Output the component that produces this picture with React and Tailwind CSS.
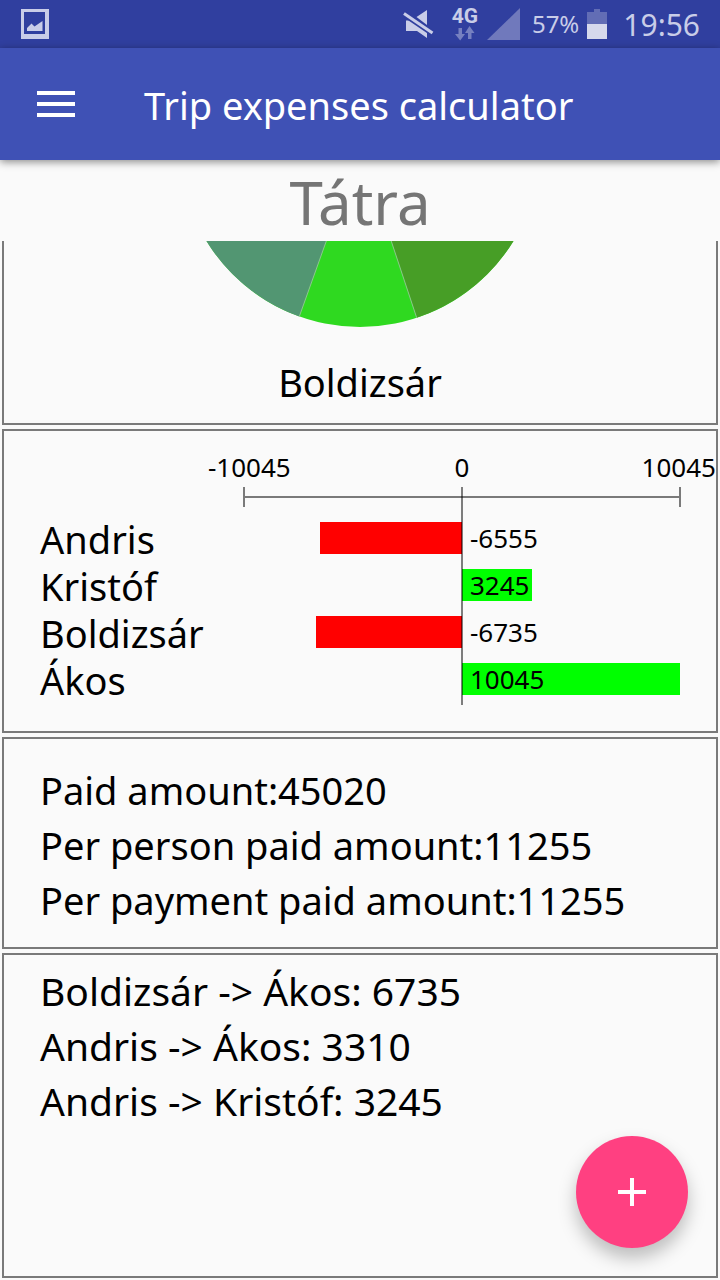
import React from "react";

const LIMIT = 10045;

const balances = [
  { name: "Andris", value: -6555 },
  { name: "Kristóf", value: 3245 },
  { name: "Boldizsár", value: -6735 },
  { name: "Ákos", value: 10045 },
];

const totals = [
  "Paid amount:45020",
  "Per person paid amount:11255",
  "Per payment paid amount:11255",
];

const transfers = [
  "Boldizsár -> Ákos: 6735",
  "Andris -> Ákos: 3310",
  "Andris -> Kristóf: 3245",
];

function StatusBar() {
  return (
    <div className="flex h-12 items-center bg-[#303f9f] pl-5 pr-5 text-[#c9cde8]">
      <svg className="h-8 w-8" viewBox="0 0 32 32" aria-hidden="true">
        <path fill="currentColor" fillRule="evenodd" d="M1 1H29V31H1ZM4 4V26H25V4Z" />
        <path fill="currentColor" d="M7 20L11.5 15.500L14.500 18.500L22.500 13V23H7Z" />
      </svg>
      <div className="ml-auto flex items-center">
        <svg className="h-8 w-8" viewBox="0 0 32 32" aria-hidden="true">
          <path fill="currentColor" d="M13.500 9L24 2V17ZM3 12.500H9L24 22.500V30L14 23H3Z" />
          <path stroke="#303f9f" strokeWidth="6" d="M0 5L30 25.500" />
          <path stroke="currentColor" strokeWidth="3" d="M1 5.500L29.500 25" />
        </svg>
        <div className="ml-4 flex w-7 flex-col items-center">
          <span className="font-[Roboto] text-[21px] font-bold leading-5">4G</span>
          <svg className="h-4 w-5" viewBox="0 0 20 16" aria-hidden="true">
            <path fill="#7680c0" d="M3.500 2H7V8H10L5.200 14.500L0 8H3.500ZM13 13V7H10L14.500 0L19.500 7H16.500V13Z" />
          </svg>
        </div>
        <svg className="ml-2 h-8 w-[33px]" viewBox="0 0 33 32" aria-hidden="true">
          <path fill="#7079bc" d="M33 0V32H0Z" />
        </svg>
        <span className="ml-3 text-2xl">57%</span>
        <svg className="ml-2 h-[30px] w-5" viewBox="0 0 20 30" aria-hidden="true">
          <path fill="#626db5" d="M7 0H13V3H20V15H0V3H7Z" />
          <path fill="#d6d9ec" d="M0 15H20V30H0Z" />
        </svg>
        <span className="ml-4 pt-[2px] text-[30px] leading-10">19:56</span>
      </div>
    </div>
  );
}

function AppBar() {
  return (
    <header className="relative z-10 flex h-28 items-center bg-[#3f51b5] pl-8 text-white shadow-[0_2px_8px_rgba(0,0,0,0.45)]">
      <button type="button" aria-label="Open menu" className="flex h-12 w-12 items-center justify-center">
        <svg className="h-[26px] w-[38px]" viewBox="0 0 38 26" aria-hidden="true">
          <path fill="currentColor" d="M0 0H38V4H0ZM0 11H38V15H0ZM0 22H38V26H0Z" />
        </svg>
      </button>
      <h1 className="ml-16 pt-[2px] text-[38px] leading-[55px]">Trip expenses calculator</h1>
    </header>
  );
}

function PieCard() {
  return (
    <section className="flex flex-col items-center border-2 border-t-0 border-[#7a7a7a] pb-[13px]">
      <svg className="h-[86px] w-[360px]" viewBox="180 241 360 86" role="img" aria-label="Share of payments">
        <circle cx="360" cy="147" r="180" fill="#2fd920" />
        <path fill="#529672" d="M360 147L299.300 316.500A180 180 0 0 1 180 147Z" />
        <path fill="#479e26" d="M360 147L416.700 317.800A180 180 0 0 0 540 147Z" />
        <path fill="none" stroke="#8bc98b" d="M299.300 316.500L360 147L416.700 317.800" />
      </svg>
      <p className="mt-7 text-[38px] leading-[55px]">Boldizsár</p>
    </section>
  );
}

function BalanceCard() {
  return (
    <section className="border-2 border-[#7a7a7a] pb-[26px] pl-9 pr-9 pt-5">
      <div className="flex">
        <ul className="w-[204px] pt-[65px]">
          {balances.map((b) => (
            <li key={b.name} className="text-[38px] leading-[47px]">
              {b.name}
            </li>
          ))}
        </ul>
        <div className="flex-1">
          <div className="-mx-9 grid h-9 grid-cols-3 text-[26px] leading-8">
            <span>{-LIMIT}</span>
            <span className="text-center">0</span>
            <span className="text-right">{LIMIT}</span>
          </div>
          <div className="relative pb-[10px]">
            <div className="-mx-px flex h-5 items-center border-x-2 border-[#7a7a7a]">
              <div className="h-[2px] w-full bg-[#7a7a7a]" />
            </div>
            <div className="mt-[15px] flex flex-col gap-[15px]">
              {balances.map((b) => (
                <div key={b.name} className="grid h-8 grid-cols-2">
                  <div className="flex justify-end">
                    {b.value < 0 && (
                      <div className="h-8 bg-[#ff0000]" style={{ width: `${(-b.value / LIMIT) * 100}%` }} />
                    )}
                  </div>
                  <div className="grid items-center">
                    <div
                      className="col-start-1 row-start-1 h-8 bg-[#00ff00]"
                      style={{ width: `${(Math.max(b.value, 0) / LIMIT) * 100}%` }}
                    />
                    <span className="col-start-1 row-start-1 pl-2 text-[26px] leading-8">{b.value}</span>
                  </div>
                </div>
              ))}
            </div>
            <div className="absolute inset-y-0 left-1/2 -ml-px w-[2px] bg-black/50" />
          </div>
        </div>
      </div>
    </section>
  );
}

export default function App() {
  return (
    <div className="flex min-h-screen flex-col bg-[#fafafa] font-['Noto_Sans',sans-serif] text-black">
      <StatusBar />
      <AppBar />
      <main className="flex flex-1 flex-col">
        <h2 className="h-[81px] text-center text-[60px] leading-[84px] text-[#757575]">Tátra</h2>
        <div className="flex flex-1 flex-col gap-1 px-[2px] pb-[2px]">
          <PieCard />
          <BalanceCard />
          <section className="border-2 border-[#7a7a7a] px-9 pb-[19px] pt-6 text-[38px] leading-[55px]">
            {totals.map((line) => (
              <p key={line}>{line}</p>
            ))}
          </section>
          <section className="flex-1 border-2 border-[#7a7a7a] px-9 pb-20 pt-2 text-[39px] leading-[55px]">
            {transfers.map((line) => (
              <p key={line}>{line}</p>
            ))}
          </section>
        </div>
      </main>
      <button
        type="button"
        aria-label="Add expense"
        className="fixed bottom-8 right-8 flex h-28 w-28 items-center justify-center rounded-full bg-[#ff4081] text-white shadow-[0_10px_18px_rgba(0,0,0,0.25)]"
      >
        <svg className="h-7 w-7" viewBox="0 0 28 28" aria-hidden="true">
          <path fill="currentColor" d="M12 0H16V12H28V16H16V28H12V16H0V12H12Z" />
        </svg>
      </button>
    </div>
  );
}
